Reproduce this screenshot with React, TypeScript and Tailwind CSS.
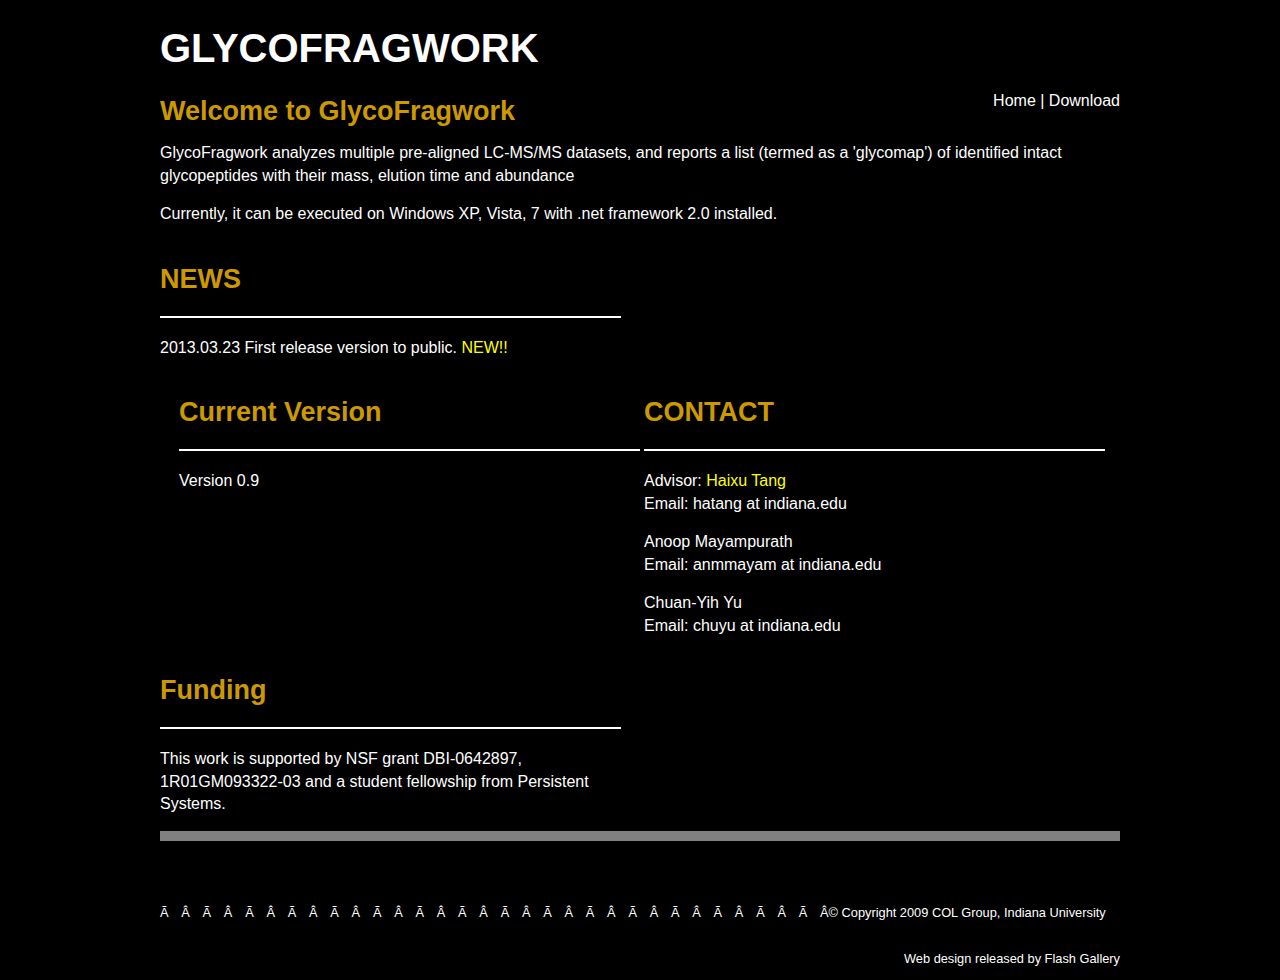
const gold = "text-[#cc9900]";

function SectionTitle({ children }: { children: React.ReactNode }) {
  return (
    <>
      <h2 className={`text-[27px] leading-[31px] font-bold ${gold}`}>{children}</h2>
      <hr className="mt-[21px] mb-[19px] border-0 h-[2px] bg-white" />
    </>
  );
}

const contacts = [
  { name: "Haixu Tang", advisor: true, email: "hatang at indiana.edu" },
  { name: "Anoop Mayampurath", advisor: false, email: "anmmayam at indiana.edu" },
  { name: "Chuan-Yih Yu", advisor: false, email: "chuyu at indiana.edu" },
];

const mojibake = Array.from({ length: 31 }, (_, i) => (i % 2 === 0 ? "Ã" : "Â")).join(" ");

export default function App() {
  return (
    <div className="min-h-[980px] bg-black text-white font-['Liberation_Sans',Arial,sans-serif] text-[16px] leading-[22.5px]">
      <div className="w-[960px] mx-auto pt-[25px] pb-[10px]">
        <h1 className="text-[40px] leading-[46px] font-bold">GLYCOFRAGWORK</h1>

        <div className="flex justify-between items-start mt-[25px]">
          <h2 className={`text-[27px] leading-[31px] font-bold ${gold}`}>Welcome to GlycoFragwork</h2>
          <div className="-mt-[6px]">
            <a href="#">Home</a> | <a href="#">Download</a>
          </div>
        </div>

        <p className="mt-[15px]">
          GlycoFragwork analyzes multiple pre-aligned LC-MS/MS datasets, and reports a list (termed as a
          'glycomap') of identified intact glycopeptides with their mass, elution time and abundance
        </p>
        <p className="mt-[16px]">Currently, it can be executed on Windows XP, Vista, 7 with .net framework 2.0 installed.</p>

        <div className="w-[461px] mt-[38px]">
          <SectionTitle>NEWS</SectionTitle>
          <p>
            2013.03.23 First release version to public. <span className="text-[#ffff00]">NEW!!</span>
          </p>
        </div>

        <div className="flex gap-[4px] pl-[19px] mt-[38px]">
          <div className="w-[461px]">
            <SectionTitle>Current Version</SectionTitle>
            <p className="mt-[1px]">Version 0.9</p>
          </div>
          <div className="w-[461px]">
            <SectionTitle>CONTACT</SectionTitle>
            <div className="flex flex-col gap-[16px] mt-[1px]">
              {contacts.map((c) => (
                <p key={c.email}>
                  {c.advisor ? (
                    <>
                      Advisor: <span className="text-[#ffff00]">{c.name}</span>
                    </>
                  ) : (
                    c.name
                  )}
                  <br />
                  Email: {c.email}
                </p>
              ))}
            </div>
          </div>
        </div>

        <div className="w-[461px] mt-[38px]">
          <SectionTitle>Funding</SectionTitle>
          <p>
            This work is supported by NSF grant DBI-0642897, 1R01GM093322-03 and a student fellowship from
            Persistent Systems.
          </p>
        </div>

        <div className="h-[10px] bg-[#808080] mt-[15px]" />

        <div className="text-[12.8px] leading-[15px] mt-[64px]">
          <p className="[word-spacing:9.2px]">
            {mojibake} <span className="[word-spacing:0px]">Â© Copyright 2009 COL Group, Indiana University</span>
          </p>
          <p className="text-right mt-[31px]">Web design released by Flash Gallery</p>
        </div>
      </div>
    </div>
  );
}
